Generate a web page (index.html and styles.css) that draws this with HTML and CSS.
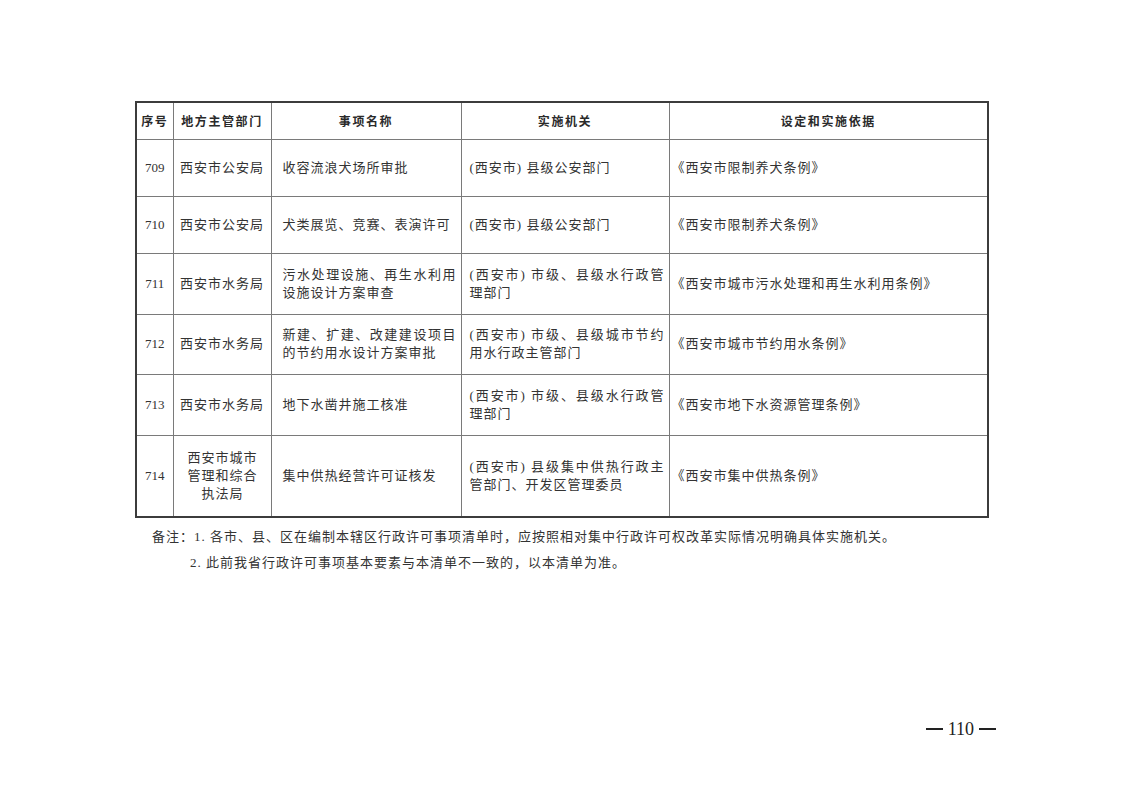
FILE: index.html
```html
<!DOCTYPE html>
<html lang="zh-CN">
<head>
<meta charset="utf-8">
<title>行政许可事项清单</title>
<link rel="stylesheet" href="styles.css">
</head>
<body>
<div class="page">
  <div class="content">
    <table class="list">
      <colgroup>
        <col class="c-no"><col class="c-dept"><col class="c-item"><col class="c-org"><col class="c-basis">
      </colgroup>
      <thead>
        <tr class="r-head">
          <th>序号</th>
          <th>地方主管部门</th>
          <th>事项名称</th>
          <th>实施机关</th>
          <th>设定和实施依据</th>
        </tr>
      </thead>
      <tbody>
        <tr class="r-57">
          <td class="no">709</td>
          <td class="dept">西安市公安局</td>
          <td class="item">收容流浪犬场所审批</td>
          <td class="org">(西安市) 县级公安部门</td>
          <td class="basis">《西安市限制养犬条例》</td>
        </tr>
        <tr class="r-57">
          <td class="no">710</td>
          <td class="dept">西安市公安局</td>
          <td class="item">犬类展览、竞赛、表演许可</td>
          <td class="org">(西安市) 县级公安部门</td>
          <td class="basis">《西安市限制养犬条例》</td>
        </tr>
        <tr class="r-61">
          <td class="no">711</td>
          <td class="dept">西安市水务局</td>
          <td class="item">污水处理设施、再生水利用设施设计方案审查</td>
          <td class="org">(西安市) 市级、县级水行政管理部门</td>
          <td class="basis">《西安市城市污水处理和再生水利用条例》</td>
        </tr>
        <tr class="r-60">
          <td class="no">712</td>
          <td class="dept">西安市水务局</td>
          <td class="item">新建、扩建、改建建设项目的节约用水设计方案审批</td>
          <td class="org">(西安市) 市级、县级城市节约用水行政主管部门</td>
          <td class="basis">《西安市城市节约用水条例》</td>
        </tr>
        <tr class="r-61">
          <td class="no">713</td>
          <td class="dept">西安市水务局</td>
          <td class="item">地下水凿井施工核准</td>
          <td class="org">(西安市) 市级、县级水行政管理部门</td>
          <td class="basis">《西安市地下水资源管理条例》</td>
        </tr>
        <tr class="r-83">
          <td class="no">714</td>
          <td class="dept narrow">西安市城市管理和综合执法局</td>
          <td class="item">集中供热经营许可证核发</td>
          <td class="org">(西安市) 县级集中供热行政主管部门、开发区管理委员</td>
          <td class="basis">《西安市集中供热条例》</td>
        </tr>
      </tbody>
    </table>
    <div class="notes">
      <p class="note"><span class="note-label">备注：</span>1. 各市、县、区在编制本辖区行政许可事项清单时，应按照相对集中行政许可权改革实际情况明确具体实施机关。</p>
      <p class="note note-indent">2. 此前我省行政许可事项基本要素与本清单不一致的，以本清单为准。</p>
    </div>
  </div>
  <div class="footer">
    <span class="page-no"><span class="dash"></span>110<span class="dash"></span></span>
  </div>
</div>
</body>
</html>
```

FILE: styles.css
```css
* { box-sizing: border-box; }
html, body { margin: 0; padding: 0; background: #fff; }
body {
  font-family: "Liberation Serif", "Noto Sans CJK SC", serif;
  font-weight: 400;
  color: #333;
}
.page {
  width: 1123px;
  height: 794px;
  display: flex;
  flex-direction: column;
}
.content {
  padding: 101px 0 0 135px;
}
.list {
  width: 852px;
  border-collapse: collapse;
  table-layout: fixed;
  border: 2px solid #3c3c3c;
}
.c-no { width: 37px; }
.c-dept { width: 98px; }
.c-item { width: 190px; }
.c-org { width: 208px; }
.c-basis { width: 319px; }

.list th, .list td {
  border: 1px solid #7a7a7a;
  vertical-align: middle;
  padding: 0;
}
.list th {
  font-family: "Noto Sans CJK SC", sans-serif;
  font-weight: 700;
  font-size: 12px;
  letter-spacing: 1.6px;
  text-align: center;
  color: #2a2a2a;
}
.r-head { height: 37px; }
.r-57 { height: 57px; }
.r-60 { height: 60px; }
.r-61 { height: 61px; }
.r-83 { height: 82px; }

.list td {
  font-size: 13px;
  line-height: 18px;
  letter-spacing: 1px;
}
.no {
  text-align: center;
  font-size: 13px;
  letter-spacing: 0 !important;
}
.dept {
  text-align: center;
  padding: 0 2px;
}
.dept.narrow {
  padding: 0 9px 0 10px !important;
}
.item {
  padding: 0 4px 0 11px !important;
  text-align: justify;
}
.org {
  padding: 0 4px 0 8px !important;
  text-align: justify;
}
.basis {
  padding: 0 4px 0 2px !important;
  text-align: left;
}

.notes {
  padding: 6px 0 0 17px;
}
.note {
  margin: 0;
  font-size: 13px;
  line-height: 26px;
  letter-spacing: 1px;
}
.note-indent {
  padding-left: 38px;
}

.footer {
  margin-top: auto;
  padding: 0 127px 55px 0;
  display: flex;
  justify-content: flex-end;
}
.page-no {
  display: flex;
  align-items: center;
  gap: 5px;
  font-family: "Liberation Serif", serif;
  font-size: 18px;
  line-height: 20px;
  color: #222;
}
.dash {
  display: block;
  width: 17px;
  height: 1.5px;
  background: #222;
}
```
